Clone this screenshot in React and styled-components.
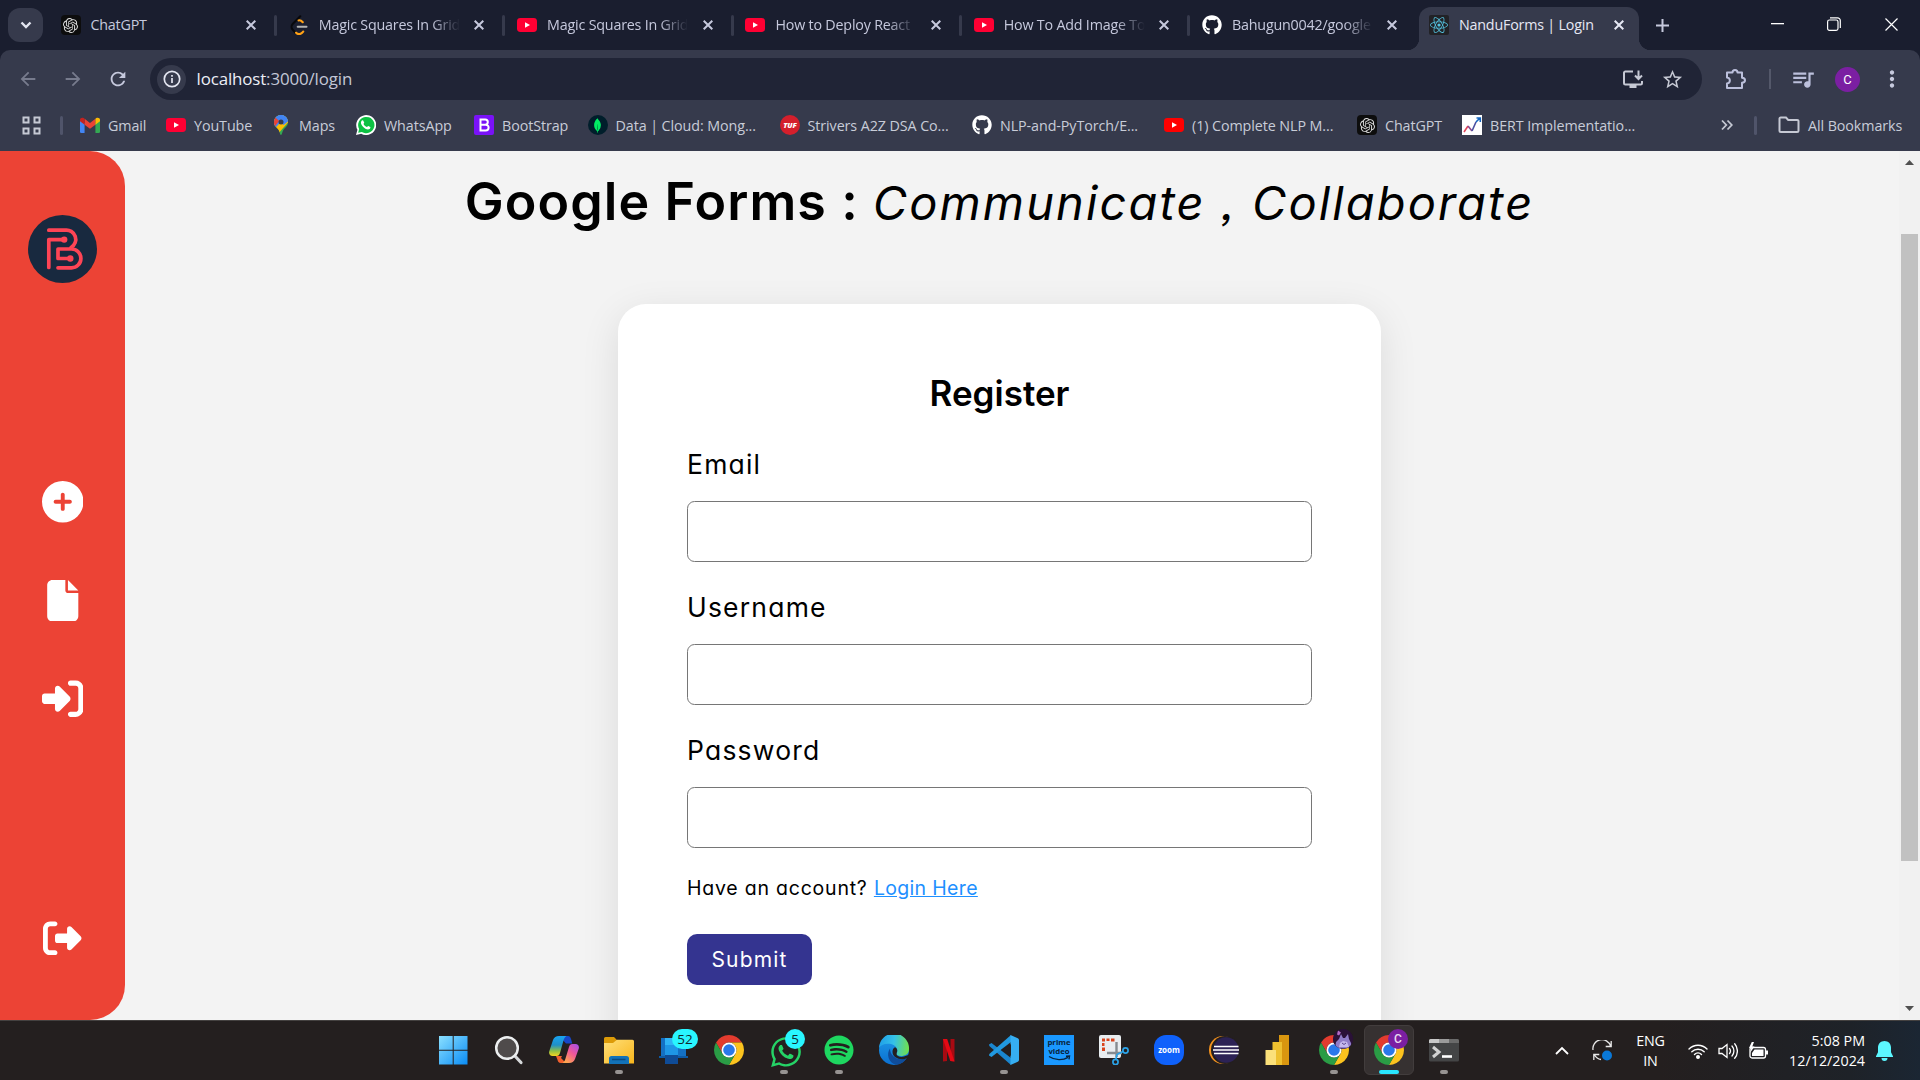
import React from "react";
import styled, { createGlobalStyle, css } from "styled-components";
import { SiOpenai, SiMongodb } from "react-icons/si";
import {
  FaGithub,
  FaReact,
  FaWhatsapp,
  FaSpotify,
  FaCirclePlus,
  FaFile,
  FaRightToBracket,
  FaRightFromBracket,
} from "react-icons/fa6";
import {
  MdArrowBack,
  MdArrowForward,
  MdRefresh,
  MdStarBorder,
  MdQueueMusic,
  MdMoreVert,
} from "react-icons/md";

const ui = `"Open Sans", "Noto Sans", sans-serif`;
const page = `Inter, "Open Sans", sans-serif`;

const Global = createGlobalStyle`
  * { box-sizing: border-box; }
  body { margin: 0; overflow: hidden; background: #1a1e2f; }
  svg { display: block; flex: none; }
`;

const Screen = styled.div`
  width: 1920px;
  height: 1080px;
  display: flex;
  flex-direction: column;
  overflow: hidden;
  font-family: ${ui};
`;

/* ---------- tab strip ---------- */

const TabStrip = styled.div`
  height: 50px;
  flex: none;
  display: flex;
  background: #1a1e2f;
  color: #c6c9dd;
`;

const TabSearch = styled.div`
  width: 35px;
  height: 34px;
  margin: 8px 7.5px 0 8px;
  border-radius: 12px;
  background: #363a4c;
  display: grid;
  place-items: center;
`;

const Tab = styled.div`
  width: 228.3px;
  height: 50px;
  display: flex;
  align-items: center;
  padding-left: 10px;
  flex: none;
  ${(p) =>
    p.$active &&
    css`
      width: 220px;
      height: 43px;
      margin-top: 7px;
      margin-left: -1.3px;
      padding-bottom: 7px;
      background: #363a4c;
      border-radius: 12px 12px 0 0;
      color: #e6e8f4;
      position: relative;
      &::before,
      &::after {
        content: "";
        position: absolute;
        bottom: 0;
        width: 12px;
        height: 12px;
      }
      &::before {
        left: -12px;
        background: radial-gradient(circle at 0 0, transparent 12px, #363a4c 12.5px);
      }
      &::after {
        right: -12px;
        background: radial-gradient(circle at 100% 0, transparent 12px, #363a4c 12.5px);
      }
    `}
`;

const IconBox = styled.div`
  width: 20px;
  height: 20px;
  flex: none;
  display: grid;
  place-items: center;
  overflow: hidden;
  border-radius: ${(p) => p.$radius || "0"};
  background: ${(p) => p.$bg || "transparent"};
  color: ${(p) => p.$fg || "#fff"};
`;

const TabTitle = styled.div`
  width: 143px;
  margin-left: 10px;
  overflow: hidden;
  white-space: nowrap;
  font-size: 14.3px;
  line-height: 22px;
  letter-spacing: -0.2px;
  ${(p) =>
    p.$fade &&
    css`
      mask-image: linear-gradient(90deg, #000 112px, transparent 141px);
    `}
`;

const TabClose = styled.div`
  width: 20px;
  margin-left: 7.5px;
  display: grid;
  place-items: center;
`;

const TabDivider = styled.div`
  width: 3px;
  height: 21px;
  margin-left: 13px;
  border-radius: 2px;
  background: #363a4c;
`;

const NewTab = styled.div`
  width: 48px;
  display: grid;
  place-items: center;
  margin-right: 62px;
`;

const WindowButton = styled.div`
  width: 57px;
  height: 48px;
  display: grid;
  place-items: center;
`;

/* ---------- toolbar ---------- */

const ChromeBody = styled.div`
  height: 101px;
  flex: none;
  background: #363a4c;
  border-radius: 10px 10px 0 0;
  color: #c6c9dd;
`;

const ToolbarBack = styled.div`
  background: #1a1e2f;
  flex: none;
`;

const Toolbar = styled.div`
  height: 58px;
  display: flex;
  align-items: center;
  padding-left: 5.5px;
`;

const NavButton = styled.div`
  width: 45px;
  flex: none;
  display: grid;
  place-items: center;
  color: ${(p) => (p.$dim ? "#777b8d" : "#c6c9dd")};
`;

const UrlBar = styled.div`
  width: 1552px;
  height: 42px;
  flex: none;
  margin-left: 9.5px;
  padding: 0 18px 0 7px;
  border-radius: 21px;
  background: #202436;
  display: flex;
  align-items: center;
`;

const InfoBadge = styled.div`
  width: 29px;
  height: 29px;
  border-radius: 50%;
  background: #363a4c;
  display: grid;
  place-items: center;
`;

const Url = styled.div`
  flex: 1;
  margin-left: 10.5px;
  font-size: 16.9px;
  line-height: 26px;
  letter-spacing: -0.13px;
  color: #c3c7d6;
  b {
    font-weight: 400;
    color: #eceef6;
  }
`;

const UrlActions = styled.div`
  display: flex;
  align-items: center;
  gap: 17px;
`;

const ToolSlot = styled.div`
  width: ${(p) => p.$w}px;
  flex: none;
  display: grid;
  place-items: center;
`;

const Divider = styled.div`
  width: 2px;
  height: 20px;
  flex: none;
  background: #54586a;
`;

const Avatar = styled.div`
  width: 25px;
  height: 25px;
  flex: none;
  border-radius: 50%;
  background: #7b1fa2;
  color: #fff;
  font: 400 13px/25px Roboto, sans-serif;
  text-align: center;
`;

/* ---------- bookmarks ---------- */

const Bookmarks = styled.div`
  height: 43px;
  display: flex;
  align-items: center;
  padding: 0 17px 9px 22px;
  font-size: 14.3px;
  color: #c8ccd8;
`;

const Bookmark = styled.div`
  width: ${(p) => p.$w}px;
  flex: none;
  display: flex;
  align-items: center;
  gap: 8px;
  white-space: nowrap;
  letter-spacing: -0.08px;
`;

const AppsDivider = styled.div`
  width: 3px;
  height: 19px;
  border-radius: 2px;
  margin-left: ${(p) => p.$ml}px;
  margin-right: ${(p) => p.$mr}px;
  background: #50546a;
`;

const MoreMarks = styled.div`
  margin-left: auto;
`;

/* ---------- page ---------- */

const Viewport = styled.div`
  height: 869px;
  flex: none;
  display: flex;
  background: #f3f3f3;
  overflow: hidden;
`;

const Sidebar = styled.nav`
  width: 125px;
  height: 869px;
  flex: none;
  border-radius: 0 35px 35px 0;
  background: #ec4335;
  color: #fff;
  display: flex;
  flex-direction: column;
  align-items: center;
  padding: 64px 0 63px;
`;

const SideMenu = styled.div`
  display: flex;
  flex-direction: column;
  align-items: center;
  gap: 57px;
  margin-top: 198px;
`;

const SideBottom = styled.div`
  margin-top: auto;
`;

const Main = styled.main`
  flex: 1;
  display: flex;
  flex-direction: column;
  align-items: center;
  padding: 16px 25px 0 0;
  font-family: ${page};
  font-feature-settings: "cv11" 1, "ss03" 1;
  color: #000;
`;

const Heading = styled.h1`
  height: 70px;
  margin: 0;
  display: flex;
  align-items: baseline;
  gap: 14px;
  white-space: nowrap;
  line-height: 70px;
`;

const Brand = styled.span`
  font-size: 52px;
  font-weight: 600;
  letter-spacing: 1.08px;
`;

const Tagline = styled.em`
  font-size: 47px;
  font-weight: 400;
  line-height: 60px;
  letter-spacing: 2.12px;
`;

const Card = styled.form`
  width: 763px;
  height: 800px;
  flex: none;
  margin-top: 67px;
  padding: 64px 69px 0;
  border-radius: 28px;
  background: #fff;
  box-shadow: 0 10px 38px rgba(0, 0, 0, 0.1);
  display: flex;
  flex-direction: column;
  align-items: flex-start;
`;

const Title = styled.h2`
  align-self: center;
  margin: 0 0 1px;
  font-size: 35px;
  font-weight: 600;
  line-height: 50px;
`;

const Label = styled.label`
  margin-top: 25px;
  font-size: 26.5px;
  line-height: 40px;
  letter-spacing: 1.2px;
`;

const Input = styled.input`
  width: 625px;
  height: 61px;
  margin: 17px 0 0;
  border: 1px solid #767676;
  border-radius: 7.5px;
  background: #fff;
`;

const Hint = styled.p`
  margin: 25px 0 31px;
  font-size: 19.5px;
  line-height: 30px;
  letter-spacing: 0.78px;
`;

const HintLink = styled.a`
  color: #1e90ff;
  text-decoration: underline;
  letter-spacing: 0.33px;
`;

const Submit = styled.button`
  width: 125px;
  height: 51px;
  border: 0;
  padding: 0;
  border-radius: 10px;
  background: #343490;
  color: #fff;
  font: 400 21px/51px ${page};
  letter-spacing: 1.15px;
  font-feature-settings: inherit;
`;

const Scrollbar = styled.div`
  width: 21px;
  background: #f1f1f1;
  display: flex;
  flex-direction: column;
  align-items: center;
  padding: 9px 0 9px;
`;

const Thumb = styled.div`
  width: 17px;
  height: 627px;
  margin: 69px 0 auto;
  background: #c1c1c1;
`;

/* ---------- taskbar ---------- */

const Taskbar = styled.footer`
  height: 60px;
  flex: none;
  display: flex;
  border-top: 1px solid #444140;
  background: linear-gradient(90deg, #241f1f 0, #241f1f 1660px, #1e2228 1850px, #1b2633 1920px);
  padding-left: 426.5px;
  color: #fff;
`;

const TaskItem = styled.div`
  width: 55px;
  height: 59px;
  flex: none;
  display: flex;
  flex-direction: column;
  align-items: center;
  padding-top: 14px;
  position: relative;
`;

const ActiveTile = styled.div`
  position: absolute;
  left: 2.5px;
  top: 4px;
  width: 50px;
  height: 50px;
  border-radius: 6px;
  border: 1px solid #423d3d;
  background: #363131;
`;

const TaskIcon = styled.div`
  width: 30px;
  height: 30px;
  display: grid;
  place-items: center;
  position: relative;
`;

const Indicator = styled.div`
  width: ${(p) => (p.$on ? 20 : 8)}px;
  height: 4px;
  margin-top: 5px;
  border-radius: 2px;
  position: relative;
  background: ${(p) => (p.$on ? "#29e6ff" : "#979392")};
`;

const Badge = styled.div`
  position: absolute;
  left: ${(p) => p.$x}px;
  top: -6px;
  width: ${(p) => p.$w}px;
  height: 20px;
  border-radius: 10px;
  background: #29f6ff;
  color: #10282c;
  font-size: 13.5px;
  line-height: 20px;
  text-align: center;
`;

const ProfileBadge = styled.div`
  position: absolute;
  left: 14px;
  top: -6px;
  width: 20px;
  height: 20px;
  border-radius: 50%;
  overflow: hidden;
  background: ${(p) => p.$bg};
  color: #e9dcf0;
  font: 500 12px/20px Roboto, sans-serif;
  text-align: center;
`;

const Tray = styled.div`
  margin-left: auto;
  display: flex;
  align-items: center;
  padding-right: 27px;
  font-size: 14.3px;
  line-height: 20px;
`;

const TrayItem = styled.div`
  margin-right: ${(p) => p.$mr}px;
`;

const Lang = styled.div`
  width: 34px;
  margin-right: 20px;
  text-align: center;
  letter-spacing: -0.2px;
`;

const Clock = styled.div`
  width: 98.5px;
  margin-right: 11px;
  text-align: right;
  letter-spacing: 0;
  white-space: nowrap;
`;

/* ---------- icons ---------- */

const Cross = ({ s = 10, w = 2 }) => (
  <svg width={s} height={s} viewBox="0 0 10 10" stroke="currentColor" strokeWidth={w} fill="none">
    <path d="M.7.7l8.6 8.6M9.3.7L.7 9.3" />
  </svg>
);

const YouTube = ({ c = "#ff0033" }) => (
  <svg width="20" height="20" viewBox="0 0 20 20">
    <rect y="3" width="20" height="14" rx="3.4" fill={c} />
    <path d="M8 7.2v5.6l5-2.8z" fill="#fff" />
  </svg>
);

const ChatGPTIcon = () => (
  <IconBox $bg="#0d0d0d" $radius="4px" $fg="#dcdcdc">
    <SiOpenai size={15} />
  </IconBox>
);

const LeetIcon = () => (
  <svg width="20" height="20" viewBox="0 0 24 24" fill="none" strokeWidth="2.5" strokeLinecap="round">
    <path d="M13.500 1.500L4.400 10.800a5 5 0 0 0 0 6.800L7.500 21" stroke="#07080c" />
    <path d="M11.500 6.500c1.800-.7 3.300.2 5 2.200M8.500 21.200c2 2 5 2 7 .3l1.600-1.700" stroke="#ffa116" />
    <path d="M10.500 14h10.500" stroke="#b3b3b3" />
  </svg>
);

const Gmail = () => (
  <svg width="20" height="20" viewBox="0 0 24 24">
    <path d="M0 5v15a1.600 1.600 0 0 0 1.600 1.600H5.500V10z" fill="#4285f4" />
    <path d="M24 5v15a1.600 1.600 0 0 1-1.600 1.600H18.500V10z" fill="#34a853" />
    <path d="M5.500 11.700V4.600L12 9.500l6.500-4.900v7.100L12 16.600z" fill="#ea4335" />
    <path d="M0 5.500v2l5.500 4.200V4.600L4.400 3.700C2.600 2.400 0 3.600 0 5.500z" fill="#c5221f" />
    <path d="M24 5.500v2l-5.500 4.200V4.600l1.100-.9C21.400 2.400 24 3.600 24 5.500z" fill="#fbbc04" />
  </svg>
);

const MapsPin = () => (
  <svg width="20" height="20" viewBox="0 0 24 24">
    <defs>
      <clipPath id="pin">
        <path d="M12 0a8.400 8.400 0 0 0-8.400 8.400c0 5 3.500 6.600 5.600 9.600 1.300 2 1.500 6 2.800 6s1.500-4 2.800-6c2.100-3 5.600-4.600 5.600-9.600A8.400 8.400 0 0 0 12 0z" />
      </clipPath>
    </defs>
    <g clipPath="url(#pin)">
      <path d="M0 0h24v24H0z" fill="#34a853" />
      <path d="M0 0h24v5L9 22 0 14z" fill="#fbbc04" />
      <path d="M0 0h24v6l-7 2-5 0-7 8H0z" fill="#4285f4" />
      <path d="M0 0l5 2.800 5 4.200L3.500 15 0 12z" fill="#ea4335" />
      <path d="M5 2.500L12-1h12v6l-9 7z" fill="#4285f4" />
    </g>
    <circle cx="12" cy="8.400" r="3" fill="#363a4c" />
  </svg>
);

const WhatsAppMark = () => (
  <svg width="20" height="20" viewBox="0 0 24 24">
    <path d="M0 24l1.700-6.200A12 12 0 1 1 6.200 22.400z" fill="#fff" />
    <path d="M2.600 21.400l1.200-4.500A9.800 9.800 0 1 1 7 20.300z" fill="#0dc143" />
    <path
      d="M8.600 6.700c-.4-.9-1.400-.5-1.900.1-1.800 2.200-.3 5 1.700 7.200 2.200 2.300 5.600 4.300 7.900 2.700 1-.7 1.300-2 .8-2.300l-2.300-1.100c-.6-.3-1.100 1.300-1.700 1.200-1.700-.5-3.500-2.200-4-3.700-.1-.5 1-1 .7-1.700z"
      fill="#fff"
    />
  </svg>
);

const Chart = () => (
  <svg width="20" height="20" viewBox="0 0 20 20">
    <rect width="20" height="20" fill="#fff" />
    <g fill="none" strokeWidth="1.600">
      <path d="M2 17l4-6" stroke="#e2475a" />
      <path d="M6 11l4 5" stroke="#8a4a8f" />
      <path d="M10 16l4-9" stroke="#4a4f9f" />
      <path d="M14 7l4-4M14.500 3H18.300v4" stroke="#1565c0" />
    </g>
  </svg>
);

const ChromeLogo = () => (
  <svg width="30" height="30" viewBox="0 0 48 48">
    <path d="M3.220 12A24 24 0 0 1 44.780 12H24A12 12 0 0 0 13.610 30z" fill="#e33b2e" />
    <path d="M44.780 12A24 24 0 0 1 24 48L34.390 30A12 12 0 0 0 24 12z" fill="#fcc31e" />
    <path d="M24 48A24 24 0 0 1 3.220 12L13.610 30A12 12 0 0 0 34.390 30z" fill="#2a9c45" />
    <circle cx="24" cy="24" r="12" fill="#fff" />
    <circle cx="24" cy="24" r="9.300" fill="#2a78ea" />
  </svg>
);

const Logo = () => (
  <svg width="69" height="68" viewBox="0 0 69 68">
    <ellipse cx="34.500" cy="34" rx="34.500" ry="34" fill="#18293f" />
    <g fill="none" stroke="#ff4455" strokeWidth="3.700" strokeLinecap="round" strokeLinejoin="round">
      <path d="M20.800 15.200H37a9.300 9.300 0 0 1 6 17.300" />
      <path d="M20.800 52.500V24.600h15" />
      <path d="M30 52.800h13.500a9.400 9.400 0 0 0 0-18.800H30v9.500h12" />
    </g>
    <circle cx="36.200" cy="24.600" r="3.200" fill="#ff4455" />
    <circle cx="42.300" cy="43.500" r="3.200" fill="#ff4455" />
  </svg>
);

const WindowsIcon = () => (
  <svg width="30" height="30" viewBox="0 0 30 30">
    <defs>
      <linearGradient id="win" x1="0" y1="0" x2="1" y2="1">
        <stop offset="0" stopColor="#8be0ff" />
        <stop offset="1" stopColor="#0a8cf5" />
      </linearGradient>
    </defs>
    <path d="M0 1h13.700v13.700H0zM14.700 1h13.800v13.700H14.700zM0 15.700h13.700V29.500H0zM14.700 15.700h13.800V29.500H14.700z" fill="url(#win)" />
  </svg>
);

const SearchIcon = () => (
  <svg width="30" height="30" viewBox="0 0 30 30">
    <path d="M20 20l7 7.500" stroke="#d6d8da" strokeWidth="3.200" strokeLinecap="round" />
    <circle cx="13" cy="13" r="10.800" fill="#4f4b4b" stroke="#eceeef" strokeWidth="2.500" />
  </svg>
);

const CopilotIcon = () => (
  <svg width="30" height="30" viewBox="0 0 30 30">
    <defs>
      <linearGradient id="cpA" x1="0" y1="0" x2="0" y2="1">
        <stop offset="0" stopColor="#19a5f2" />
        <stop offset=".45" stopColor="#1f8fc8" />
        <stop offset=".75" stopColor="#8fc046" />
        <stop offset="1" stopColor="#f6d51f" />
      </linearGradient>
      <linearGradient id="cpB" x1="1" y1="0" x2=".3" y2="1">
        <stop offset="0" stopColor="#a04ff0" />
        <stop offset=".5" stopColor="#f0569a" />
        <stop offset="1" stopColor="#ffa54f" />
      </linearGradient>
    </defs>
    <path d="M10 1h9c2 0 2.500 1.500 3 3l1.300 4.500H17z" fill="#1747c8" />
    <path d="M10 1h7.500c-2 1-2.600 3-3.300 5.500L11 18c-.6 2-1.500 3-3.500 3H3.500C1 21-.4 19 .2 16.500L4 5c1-2.700 3-4 6-4z" fill="url(#cpA)" />
    <path d="M7 21h6l-1 2 5 5h-5c-2.500 0-3-1.500-3.600-3.500z" fill="#f2602f" />
    <path d="M20 28h-6.500c2-1 2.600-3 3.300-5.500L20 12c.6-2 1.500-3 3.500-3h3C29 9 30.400 11 29.800 13.500L26 24c-1 2.700-3 4-6 4z" fill="url(#cpB)" />
  </svg>
);

const ExplorerIcon = () => (
  <svg width="30" height="30" viewBox="0 0 30 30">
    <defs>
      <linearGradient id="fold" x1="0" y1="0" x2="1" y2="1">
        <stop offset="0" stopColor="#ffe07a" />
        <stop offset="1" stopColor="#f8b51c" />
      </linearGradient>
    </defs>
    <path d="M0 3.500A1.500 1.500 0 0 1 1.500 2H10l3 3v5H0z" fill="#dd9b08" />
    <path d="M0 8h9l4-3.300h15.500A1.500 1.500 0 0 1 30 6.200V28.500H0z" fill="url(#fold)" />
    <path d="M5 29v-5.500A2.500 2.500 0 0 1 7.500 21h15a2.500 2.500 0 0 1 2.500 2.500V29z" fill="#1372b8" />
    <path d="M8 24.500h13.500" stroke="#0b4a80" strokeWidth="1.500" />
  </svg>
);

const PhoneLinkIcon = () => (
  <svg width="30" height="30" viewBox="0 0 30 30">
    <path d="M2 3h25v18H2z" fill="#1470c4" />
    <path d="M0 21h29v2H0z" fill="#0d5aa6" />
    <path d="M6 3H19v12H6z" fill="#2fb4f6" />
    <path d="M6 10H19v10H6z" fill="#1e96e6" />
    <path d="M6 20h13v9H6z" fill="#0f4b96" />
  </svg>
);

const EdgeIcon = () => (
  <svg width="30" height="30" viewBox="0 0 30 30">
    <defs>
      <linearGradient id="edA" x1="0" y1=".3" x2="1" y2=".4">
        <stop offset="0" stopColor="#1f9fe8" />
        <stop offset=".5" stopColor="#35c1e8" />
        <stop offset="1" stopColor="#6fe04f" />
      </linearGradient>
      <linearGradient id="edB" x1="0" y1="0" x2="0" y2="1">
        <stop offset="0" stopColor="#1f9be8" />
        <stop offset="1" stopColor="#0b6fd0" />
      </linearGradient>
    </defs>
    <circle cx="15" cy="15" r="15" fill="url(#edB)" />
    <path d="M0 13A15 15 0 0 1 30 14c0 5-4 7-8 7-3 0-5.500-1.200-4.500-2.500C20 15 17 10 12 9 6 8 1.500 10 0 13z" fill="url(#edA)" />
    <path d="M11 13.500C7 19 9.500 28 17 29.800c4.500-.3 8.500-3 11-6.800-8 3.500-17-1-17-9.500z" fill="#0f4c9a" />
    <path d="M17.800 18c-1.300 3 3 4.600 7.200 3.600l5.500-2v3l-2.500.600c-6 2.500-14.500 0-14.500-6.500 0-2 .8-4 2.500-4.500 2 .8 2.800 3 1.800 5z" fill="#241f1f" />
  </svg>
);

const NetflixIcon = () => (
  <svg width="30" height="30" viewBox="0 0 30 30">
    <path d="M9 4h4v22l-4 .5zM16.500 4h4v22.500l-4-.5z" fill="#a80a12" />
    <path d="M9 4h4.200L20.500 26.500l-4.200-.5z" fill="#e50914" />
  </svg>
);

const VSCodeIcon = () => (
  <svg width="30" height="30" viewBox="0 0 30 30">
    <path d="M0 9.500L2.500 8 22 23v7L.3 11z" fill="#1a86cf" />
    <path d="M0 20.500L2.500 22 22 7V0L.3 19z" fill="#2199e0" />
    <path d="M21.500 0l7.300 3.200A2 2 0 0 1 30 5v20a2 2 0 0 1-1.200 1.800L21.500 30z" fill="#36aef2" />
    <path d="M22 9v12l-8-6z" fill="#241f1f" />
  </svg>
);

const PrimeIcon = () => (
  <svg width="30" height="30" viewBox="0 0 30 30">
    <rect width="30" height="30" fill="#1a98ff" />
    <g fill="#08233d" fontFamily="Open Sans, sans-serif" fontWeight="700" fontSize="7.800" textAnchor="middle">
      <text x="15" y="9.500">prime</text>
      <text x="15" y="18.500">video</text>
    </g>
    <path d="M5 21.500c6 4 14 4 19 .8M22 21.200l3.500-.2-.5 3.300" fill="none" stroke="#08233d" strokeWidth="1.400" />
  </svg>
);

const SnipIcon = () => (
  <svg width="30" height="30" viewBox="0 0 30 30">
    <rect width="22" height="23" rx="2" fill="#e9edf0" />
    <path d="M3 3.500h3v3H3zM7.500 3.500h3v2.500h-3zM12 3.500h3.500v3H12zM3 8h2.500v3H3zM3 12.500h3v3.500H3z" fill="#d9441c" />
    <path d="M17.500 7v15M8 18h15" stroke="#858b90" strokeWidth="2.400" />
    <g fill="none" stroke="#2ba3e8" strokeWidth="1.700">
      <circle cx="26.500" cy="15.500" r="2.600" />
      <circle cx="16.500" cy="27" r="2.600" />
      <path d="M24 16.500l-6 3-1.200 5" />
    </g>
  </svg>
);

const ZoomIcon = () => (
  <svg width="30" height="30" viewBox="0 0 30 30">
    <rect width="30" height="30" rx="12" fill="#0f61fb" />
    <text x="15" y="17.500" fill="#fff" fontFamily="Open Sans, sans-serif" fontWeight="700" fontSize="8" textAnchor="middle">
      zoom
    </text>
  </svg>
);

const EclipseIcon = () => (
  <svg width="30" height="30" viewBox="0 0 30 30">
    <circle cx="14" cy="15" r="14" fill="#f7941e" />
    <circle cx="16" cy="15" r="14" fill="#241f1f" />
    <circle cx="17" cy="15" r="12.800" fill="#2c2255" />
    <path d="M5 11.500h24.500M4 15h26M5 18.500h24.500" stroke="#fff" strokeWidth="1.700" />
  </svg>
);

const PowerBIIcon = () => (
  <svg width="30" height="30" viewBox="0 0 30 30">
    <path d="M15 0h10v30H15z" fill="#d9960f" />
    <path d="M8.500 7H18v23H8.500z" fill="#eec02f" />
    <path d="M1.500 15H12v15H1.500z" fill="#fbe07a" />
  </svg>
);

const TerminalIcon = () => (
  <svg width="30" height="30" viewBox="0 0 30 30">
    <rect y="4" width="30" height="22.500" rx="1.500" fill="#444546" />
    <path d="M0 8V5.500A1.500 1.500 0 0 1 1.500 4H10v4z" fill="#c9c9c9" />
    <path d="M10 4h10v4H10z" fill="#9b9b9b" />
    <path d="M20 4h8.500A1.500 1.500 0 0 1 30 5.500V8H20z" fill="#6a6a6a" />
    <path d="M4 12l6 5-6 5" fill="none" stroke="#d2d2d2" strokeWidth="3" />
    <path d="M13 21.500h10" stroke="#fff" strokeWidth="2.600" />
  </svg>
);

const CatBadge = () => (
  <svg width="20" height="20" viewBox="0 0 20 20">
    <rect width="20" height="20" fill="#2a1138" />
    <path d="M2 19l1-6 3-3 2-5 2 4h2l3-4 1 5 2 4 1 6z" fill="#8f7cc8" />
    <path d="M6 18l1-4 3-2 4 1 2 5z" fill="#c5b8ee" />
    <path d="M5 1.500l3 2-2 3-2-1z" fill="#b06ac4" />
    <path d="M9 14l2 1.500 2-1.500" stroke="#5a4690" fill="none" />
  </svg>
);

/* ---------- data ---------- */

const tabs = [
  ["ChatGPT", <ChatGPTIcon />],
  ["Magic Squares In Grid", <LeetIcon />, true],
  ["Magic Squares In Grid", <YouTube />, true],
  ["How to Deploy React", <YouTube />, true],
  ["How To Add Image To", <YouTube />, true],
  ["Bahugun0042/google", <FaGithub size={20} color="#fff" />, true],
];

const bookmarks = [
  ["Gmail", 86, <Gmail />],
  ["YouTube", 105, <YouTube />],
  ["Maps", 85, <MapsPin />],
  ["WhatsApp", 118, <WhatsAppMark />],
  [
    "BootStrap",
    113.5,
    <IconBox $bg="#7a12f8" $radius="2px">
      <svg width="20" height="20" viewBox="0 0 20 20" fill="none" stroke="#fff" strokeWidth="2">
        <path d="M6.500 4.500h4.700a2.600 2.600 0 0 1 0 5.200H6.500zM6.500 9.700h5.200a2.900 2.900 0 0 1 0 5.800H6.500z" />
      </svg>
    </IconBox>,
  ],
  [
    "Data | Cloud: Mong...",
    192,
    <IconBox $bg="#001e2b" $radius="50%" $fg="#00ed64">
      <SiMongodb size={15} />
    </IconBox>,
  ],
  [
    "Strivers A2Z DSA Co...",
    192.5,
    <IconBox $bg="#d41f2c" $radius="50%">
      <svg width="20" height="20" viewBox="0 0 20 20">
        <text x="10" y="12.700" fill="#fff" fontFamily="Open Sans, sans-serif" fontStyle="italic" fontWeight="800" fontSize="7.500" textAnchor="middle">
          TUF
        </text>
      </svg>
    </IconBox>,
  ],
  ["NLP-and-PyTorch/E...", 192, <FaGithub size={20} color="#fff" />],
  ["(1) Complete NLP M...", 193, <YouTube c="#ff0000" />],
  ["ChatGPT", 105, <ChatGPTIcon />],
  ["BERT Implementatio...", 190, <Chart />],
];

const tasks = [
  { icon: <WindowsIcon /> },
  { icon: <SearchIcon /> },
  { icon: <CopilotIcon /> },
  { icon: <ExplorerIcon />, open: true },
  { icon: <PhoneLinkIcon />, badge: ["52", 13, 26] },
  { icon: <ChromeLogo /> },
  { icon: <FaWhatsapp size={34} color="#25d366" />, badge: ["5", 16, 20], open: true },
  { icon: <FaSpotify size={30} color="#1ed760" />, open: true },
  { icon: <EdgeIcon /> },
  { icon: <NetflixIcon /> },
  { icon: <VSCodeIcon />, open: true },
  { icon: <PrimeIcon /> },
  { icon: <SnipIcon /> },
  { icon: <ZoomIcon /> },
  { icon: <EclipseIcon /> },
  { icon: <PowerBIIcon /> },
  { icon: <ChromeLogo />, profile: <CatBadge />, bg: "#2a1138", open: true },
  { icon: <ChromeLogo />, profile: "C", bg: "#7b1fa2", open: true, active: true },
  { icon: <TerminalIcon />, open: true },
];

export default function App() {
  return (
    <Screen>
      <Global />
      <TabStrip>
        <TabSearch>
          <svg width="12" height="8" viewBox="0 0 12 8" fill="none" stroke="#e3e5f0" strokeWidth="2.400">
            <path d="M1.500 1.500L6 6l4.500-4.500" />
          </svg>
        </TabSearch>
        {tabs.map(([title, icon, fade], i) => (
          <Tab key={i}>
            {icon}
            <TabTitle $fade={fade}>{title}</TabTitle>
            <TabClose>
              <Cross />
            </TabClose>
            {i < 5 && <TabDivider />}
          </Tab>
        ))}
        <Tab $active>
          <IconBox $bg="#222226" $radius="2px" $fg="#53c1de">
            <FaReact size={18} />
          </IconBox>
          <TabTitle>NanduForms | Login</TabTitle>
          <TabClose>
            <Cross />
          </TabClose>
        </Tab>
        <NewTab>
          <svg width="13" height="13" viewBox="0 0 13 13" stroke="#c6c9dd" strokeWidth="2">
            <path d="M6.500 0v13M0 6.500h13" />
          </svg>
        </NewTab>
        <WindowButton>
          <svg width="13" height="2" viewBox="0 0 13 2">
            <path d="M0 0h13v1.300H0z" fill="#fff" />
          </svg>
        </WindowButton>
        <WindowButton>
          <svg width="14" height="14" viewBox="0 0 14 14" fill="none" stroke="#fff" strokeWidth="1.200">
            <rect x=".6" y="3" width="10.400" height="10.400" rx="1.800" />
            <path d="M3 .8h7.500a2.800 2.800 0 0 1 2.800 2.800V11" />
          </svg>
        </WindowButton>
        <WindowButton>
          <svg width="13" height="13" viewBox="0 0 13 13" stroke="#fff" strokeWidth="1.200">
            <path d="M.5.5l12 12M12.500.5l-12 12" />
          </svg>
        </WindowButton>
      </TabStrip>
      <ToolbarBack>
        <ChromeBody>
          <Toolbar>
            <NavButton $dim>
              <MdArrowBack size={22} />
            </NavButton>
            <NavButton $dim>
              <MdArrowForward size={22} />
            </NavButton>
            <NavButton>
              <MdRefresh size={22} />
            </NavButton>
            <UrlBar>
              <InfoBadge>
                <svg width="18" height="18" viewBox="0 0 18 18" fill="none" stroke="#e3e5f0">
                  <circle cx="9" cy="9" r="7.700" strokeWidth="1.700" />
                  <path d="M9 8v5M9 5v1.700" strokeWidth="1.700" />
                </svg>
              </InfoBadge>
              <Url>
                <b>localhost</b>:3000/login
              </Url>
              <UrlActions>
                <svg width="22" height="20" viewBox="0 0 22 20" fill="none" stroke="#c6c9d4" strokeWidth="2">
                  <path d="M11 2.500H3.300A1.300 1.300 0 0 0 2 3.800v10.400a1.300 1.300 0 0 0 1.300 1.300h15.400a1.300 1.300 0 0 0 1.300-1.300V12M16.500 1.500v8M13 6.500l3.500 3.500L20 6.500" />
                  <path d="M7.500 17.500h7" strokeWidth="3" />
                </svg>
                <MdStarBorder size={23} color="#c6c9d4" />
              </UrlActions>
            </UrlBar>
            <ToolSlot $w={67}>
              <svg width="22" height="22" viewBox="0 0 22 22" fill="none" stroke="#bcc0dc" strokeWidth="2" strokeLinejoin="round">
                <path d="M2 4.500h5.500c0-3.500 5-3.500 5 0h4.500v5.300c4 .2 4 4.800 0 5V20H2v-4.500c3.800-.6 3.800-5.500 0-6z" />
              </svg>
            </ToolSlot>
            <Divider />
            <ToolSlot $w={64}>
              <MdQueueMusic size={26} color="#bcc0dc" />
            </ToolSlot>
            <Avatar>C</Avatar>
            <ToolSlot $w={64}>
              <MdMoreVert size={26} />
            </ToolSlot>
          </Toolbar>
          <Bookmarks>
            <svg width="19" height="19" viewBox="0 0 19 19" fill="none" stroke="#c6c9d4" strokeWidth="2">
              <path d="M1.500 1.500h5v5h-5zM12.500 1.500h5v5h-5zM1.500 12.500h5v5h-5zM12.500 12.500h5v5h-5z" />
            </svg>
            <AppsDivider $ml={19} $mr={17} />
            {bookmarks.map(([name, w, icon], i) => (
              <Bookmark key={i} $w={w}>
                {icon}
                {name}
              </Bookmark>
            ))}
            <MoreMarks>
              <svg width="12" height="12" viewBox="0 0 12 12" fill="none" stroke="#c6c9d4" strokeWidth="1.800">
                <path d="M1 1.500L5.300 6 1 10.500M6.500 1.500L10.800 6l-4.300 4.500" />
              </svg>
            </MoreMarks>
            <AppsDivider $ml={21} $mr={21} />
            <Bookmark $w={125}>
              <svg width="22" height="18" viewBox="0 0 22 18" fill="none" stroke="#c6c9d4" strokeWidth="2">
                <path d="M1.500 3A1.300 1.300 0 0 1 2.800 1.500H8l2.200 2.400h9A1.300 1.300 0 0 1 20.500 5.200v9.500a1.300 1.300 0 0 1-1.300 1.300H2.800a1.300 1.300 0 0 1-1.300-1.300z" />
              </svg>
              All Bookmarks
            </Bookmark>
          </Bookmarks>
        </ChromeBody>
      </ToolbarBack>

      <Viewport>
        <Sidebar>
          <Logo />
          <SideMenu>
            <FaCirclePlus size={41.5} />
            <FaFile size={41.5} />
            <FaRightToBracket size={41.5} />
          </SideMenu>
          <SideBottom>
            <FaRightFromBracket size={38.5} />
          </SideBottom>
        </Sidebar>
        <Main>
          <Heading>
            <Brand>Google Forms :</Brand>
            <Tagline>Communicate , Collaborate</Tagline>
          </Heading>
          <Card>
            <Title>Register</Title>
            {["Email", "Username", "Password"].map((name) => (
              <React.Fragment key={name}>
                <Label>{name}</Label>
                <Input type={name === "Password" ? "password" : "text"} />
              </React.Fragment>
            ))}
            <Hint>
              Have an account? <HintLink>Login Here</HintLink>
            </Hint>
            <Submit type="button">Submit</Submit>
          </Card>
        </Main>
        <Scrollbar>
          <svg width="9" height="5" viewBox="0 0 9 5">
            <path d="M0 5l4.500-5L9 5z" fill="#505050" />
          </svg>
          <Thumb />
          <svg width="9" height="5" viewBox="0 0 9 5">
            <path d="M0 0l4.500 5L9 0z" fill="#505050" />
          </svg>
        </Scrollbar>
      </Viewport>

      <Taskbar>
        {tasks.map((t, i) => (
          <TaskItem key={i}>
            {t.active && <ActiveTile />}
            <TaskIcon>
              {t.icon}
              {t.badge && (
                <Badge $x={t.badge[1]} $w={t.badge[2]}>
                  {t.badge[0]}
                </Badge>
              )}
              {t.profile && <ProfileBadge $bg={t.bg}>{t.profile}</ProfileBadge>}
            </TaskIcon>
            {t.open && <Indicator $on={t.active} />}
          </TaskItem>
        ))}
        <Tray>
          <TrayItem $mr={23}>
            <svg width="14" height="9" viewBox="0 0 14 9" fill="none" stroke="#fff" strokeWidth="1.800">
              <path d="M1 8l6-6 6 6" />
            </svg>
          </TrayItem>
          <TrayItem $mr={21}>
            <svg width="21" height="21" viewBox="0 0 21 21" fill="none" stroke="#e8e8e8" strokeWidth="1.300">
              <path d="M1 10a9 9 0 0 1 17.500-4M19.200 1v5.500h-5.500M9 19.500A9 9 0 0 1 2.500 15M1.800 20v-5.500h5.500" />
              <circle cx="15" cy="15.500" r="5" fill="#0a78d7" stroke="none" />
            </svg>
          </TrayItem>
          <Lang>
            ENG
            <br />
            IN
          </Lang>
          <TrayItem $mr={10}>
            <svg width="20" height="16" viewBox="0 0 20 16" fill="none" stroke="#fff" strokeWidth="1.400" strokeLinecap="round">
              <path d="M1 6a12.700 12.700 0 0 1 18 0M3.800 8.800a8.800 8.800 0 0 1 12.400 0M6.500 11.500a5 5 0 0 1 7 0" />
              <circle cx="10" cy="14" r="1.300" fill="#fff" />
            </svg>
          </TrayItem>
          <TrayItem $mr={10}>
            <svg width="20" height="18" viewBox="0 0 20 18" fill="none" stroke="#fff" strokeWidth="1.300" strokeLinecap="round">
              <path d="M1 6.500h3L9 2.500v13l-5-4H1zM11.500 6.500a4 4 0 0 1 0 5M14 4a7.500 7.500 0 0 1 0 10M16.700 1.800a11 11 0 0 1 0 14.400" />
            </svg>
          </TrayItem>
          <TrayItem $mr={-1}>
            <svg width="20" height="18" viewBox="0 0 20 18">
              <rect x="2" y="5.500" width="15.500" height="10.500" rx="2" fill="none" stroke="#fff" strokeWidth="1.300" />
              <path d="M6.500 7.500h9v6.500H4v-3zM18 8.500h2v4h-2z" fill="#fff" />
              <path d="M3.800 0L1 6h2.200L2 11l4.500-6.500H4.300L6 0z" fill="#fff" />
            </svg>
          </TrayItem>
          <Clock>
            5:08 PM
            <br />
            12/12/2024
          </Clock>
          <svg width="17" height="20" viewBox="0 0 17 20" fill="#5cf7ff">
            <path d="M8.500 0C4.800 0 2 2.800 2 6.500v4.800L0 15.300V16h17v-.7l-2-4V6.500C15 2.800 12.200 0 8.500 0zM5.500 17a3 3 0 0 0 6 0z" />
          </svg>
        </Tray>
      </Taskbar>
    </Screen>
  );
}
